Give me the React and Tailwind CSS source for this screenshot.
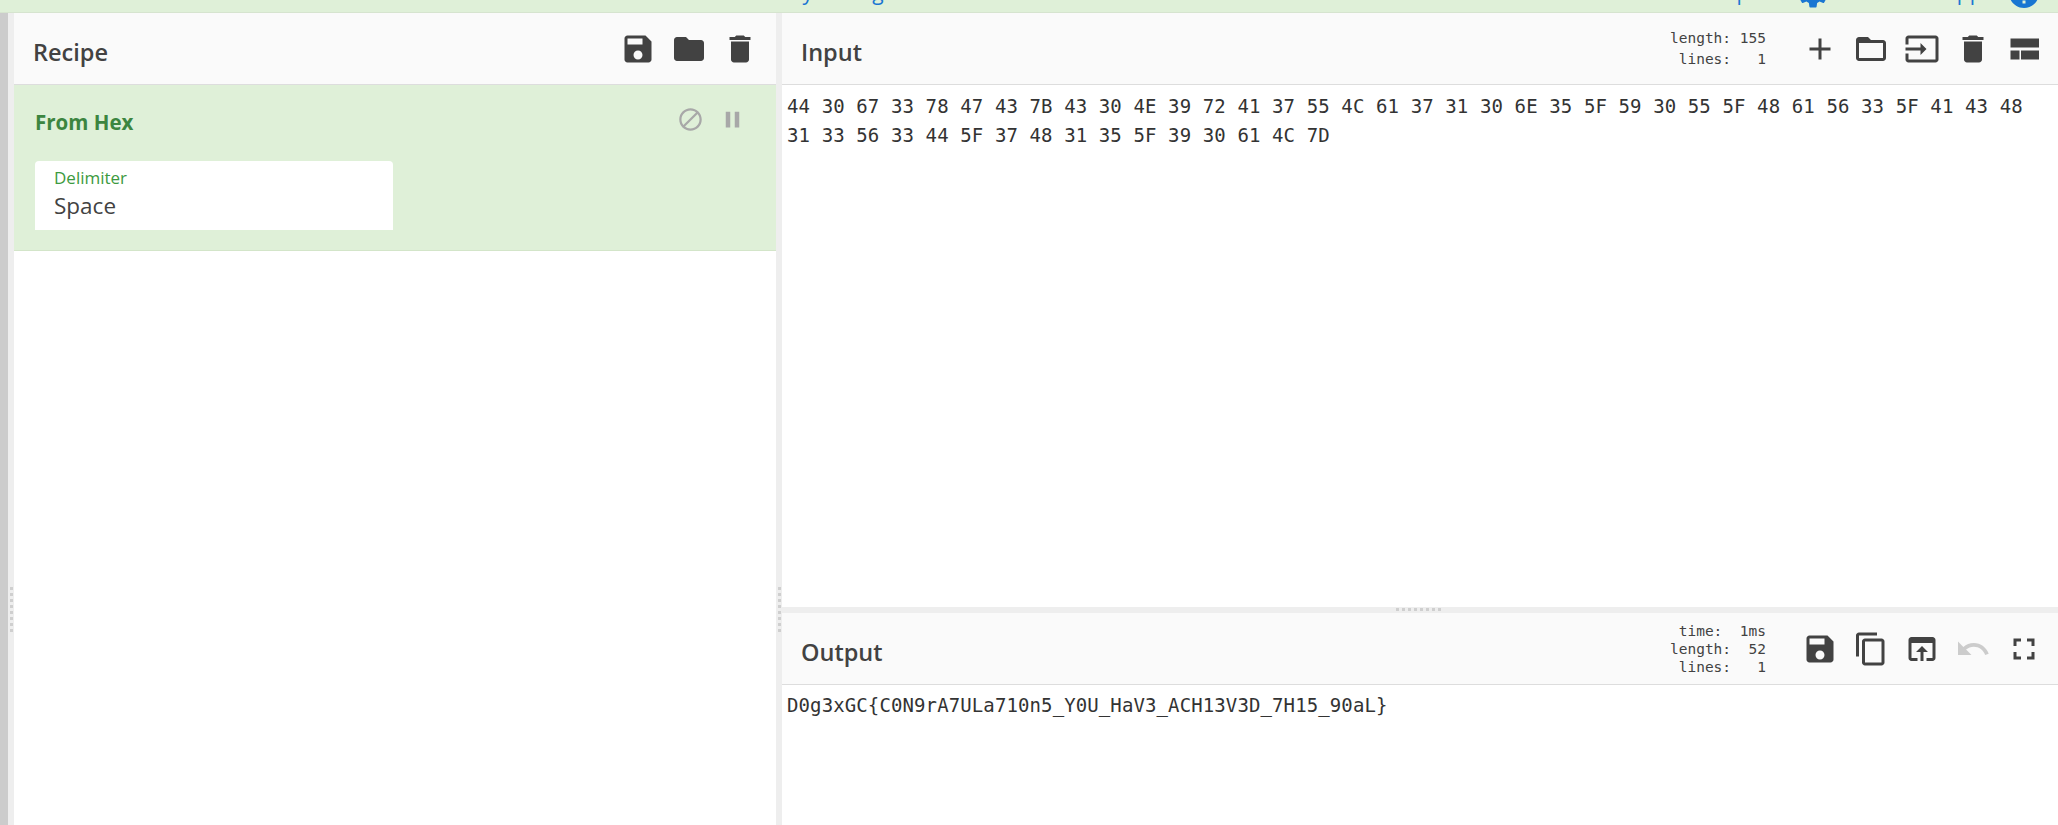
const save = "M17 3H5c-1.11 0-2 .9-2 2v14c0 1.1.89 2 2 2h14c1.1 0 2-.9 2-2V7l-4-4zm-5 16c-1.66 0-3-1.34-3-3s1.34-3 3-3 3 1.34 3 3-1.34 3-3 3zm3-10H5V5h10v4z"
const folder = "M10 4H4c-1.1 0-1.99.9-1.99 2L2 18c0 1.1.9 2 2 2h16c1.1 0 2-.9 2-2V8c0-1.1-.9-2-2-2h-8l-2-2z"
const folderOpen = "M20 6h-8l-2-2H4c-1.1 0-1.99.9-1.99 2L2 18c0 1.1.9 2 2 2h16c1.1 0 2-.9 2-2V8c0-1.1-.9-2-2-2zm0 12H4V8h16v10z"
const trash = "M6 19c0 1.1.9 2 2 2h8c1.1 0 2-.9 2-2V7H6v12zM19 4h-3.5l-1-1h-5l-1 1H5v2h14V4z"
const add = "M19 13h-6v6h-2v-6H5v-2h6V5h2v6h6v2z"
const input = "M21 3.01H3c-1.1 0-2 .9-2 2V9h2V4.99h18v14.03H3V15H1v4.01c0 1.1.9 1.98 2 1.98h18c1.1 0 2-.88 2-1.98v-14c0-1.11-.9-2-2-2zM11 16l4-4-4-4v3H1v2h10v3z"
const compact = "M3 19h6v-6H3v6zm7 0h12v-6H10v6zM3 5v6h19V5H3z"
const copy = "M16 1H4c-1.1 0-2 .9-2 2v14h2V3h12V1zm3 4H8c-1.1 0-2 .9-2 2v14c0 1.1.9 2 2 2h11c1.1 0 2-.9 2-2V7c0-1.1-.9-2-2-2zm0 16H8V7h11v14z"
const openIn = "M19 4H5c-1.11 0-2 .9-2 2v12c0 1.1.89 2 2 2h4v-2H5V8h14v10h-4v2h4c1.1 0 2-.9 2-2V6c0-1.1-.89-2-2-2zm-7 6l-4 4h3v6h2v-6h3l-4-4z"
const undo = "M12.5 8c-2.65 0-5.05.99-6.9 2.6L2 7v9h9l-3.62-3.62c1.39-1.16 3.16-1.88 5.12-1.88 3.54 0 6.55 2.31 7.6 5.5l2.37-.78C21.08 11.03 17.15 8 12.5 8z"
const fullscreen = "M7 14H5v5h5v-2H7v-3zm-2-4h2V7h3V5H5v5zm12 7h-3v2h5v-5h-2v3zM14 5v2h3v3h2V5h-5z"
const block = "M12 2C6.48 2 2 6.48 2 12s4.48 10 10 10 10-4.48 10-10S17.52 2 12 2zM4 12c0-4.42 3.58-8 8-8 1.85 0 3.55.63 4.9 1.69L5.69 16.9C4.63 15.55 4 13.85 4 12zm8 8c-1.85 0-3.55-.63-4.9-1.69L18.31 7.1C19.37 8.45 20 10.15 20 12c0 4.42-3.58 8-8 8z"
const pause = "M6 19h4V5H6v14zm8-14v14h4V5h-4z"
const settings = "M19.14 12.94c.04-.3.06-.61.06-.94 0-.32-.02-.64-.07-.94l2.03-1.58c.18-.14.23-.41.12-.61l-1.92-3.32c-.12-.22-.37-.29-.59-.22l-2.39.96c-.5-.38-1.03-.7-1.62-.94l-.36-2.54c-.04-.24-.24-.41-.48-.41h-3.84c-.24 0-.43.17-.47.41l-.36 2.54c-.59.24-1.13.57-1.62.94l-2.39-.96c-.22-.08-.47 0-.59.22L2.74 8.87c-.12.21-.08.47.12.61l2.03 1.58c-.05.3-.09.63-.09.94s.02.64.07.94l-2.03 1.58c-.18.14-.23.41-.12.61l1.92 3.32c.12.22.37.29.59.22l2.39-.96c.5.38 1.03.7 1.62.94l.36 2.54c.05.24.24.41.48.41h3.84c.24 0 .44-.17.47-.41l.36-2.54c.59-.24 1.13-.56 1.62-.94l2.39.96c.22.08.47 0 .59-.22l1.92-3.32c.12-.22.07-.47-.12-.61l-2.01-1.58zM12 15.6c-1.98 0-3.6-1.62-3.6-3.6s1.62-3.6 3.6-3.6 3.6 1.62 3.6 3.6-1.62 3.6-3.6 3.6z"
const help = "M12 2C6.48 2 2 6.48 2 12s4.48 10 10 10 10-4.48 10-10S17.52 2 12 2zm1 17h-2v-2h2v2zm2.07-7.75l-.9.92C13.45 12.9 13 13.5 13 15h-2v-.5c0-1.1.45-2.1 1.17-2.83l1.24-1.26c.37-.36.59-.86.59-1.41 0-1.1-.9-2-2-2s-2 .9-2 2H8c0-2.21 1.79-4 4-4s4 1.79 4 4c0 .88-.36 1.68-.93 2.25z"

function Icon({ d, className = 'w-[36px] h-[36px] text-[#424242]' }) {
  return (
    <svg className={className} viewBox="0 0 24 24" fill="currentColor">
      <path d={d} />
    </svg>
  )
}

function Stats({ rows, className }) {
  return (
    <div className={`font-['DejaVu_Sans_Mono',monospace] text-[14.5px] text-[#424242] whitespace-pre text-right mr-[36px] ${className}`}>
      {rows.map((r) => (
        <div key={r}>{r}</div>
      ))}
    </div>
  )
}

// Poignée de redimensionnement (points gris)
function Grip({ className }) {
  return (
    <div className={`flex gap-[3px] ${className}`}>
      {[0, 1, 2, 3, 4, 5, 6, 7].map((i) => (
        <div key={i} className="w-[3px] h-[3px] bg-[#cfcfcf]" />
      ))}
    </div>
  )
}

export default function App() {
  const hex = '44 30 67 33 78 47 43 7B 43 30 4E 39 72 41 37 55 4C 61 37 31 30 6E 35 5F 59 30 55 5F 48 61 56 33 5F 41 43 48 31 33 56 33 44 5F 37 48 31 35 5F 39 30 61 4C 7D'

  return (
    <div className="w-[2058px] h-[825px] flex flex-col overflow-hidden bg-white font-['Open_Sans',sans-serif] text-[#424242]">
      {/* bandeau du haut, coupé par le scroll */}
      <div className="h-[13px] shrink-0 bg-[#dff0d8] border-b border-[#d6e4cf] overflow-hidden flex items-start pl-[785px] text-[21px] leading-[30px] text-[#1976d2] whitespace-nowrap">
        <span className="-mt-[23px] flex-none">2 years ago</span>
        <span className="-mt-[23px] ml-[824px] flex-none">Options</span>
        <Icon d={settings} className="-mt-[25px] -ml-[3px] w-[36px] h-[36px] flex-none text-[#1976d2]" />
        <span className="-mt-[23px] ml-[24px] flex-none">About / Support</span>
        <Icon d={help} className="-mt-[25px] -ml-[5px] w-[36px] h-[36px] flex-none text-[#1976d2]" />
      </div>

      <div className="flex flex-1 min-h-0">
        <div className="w-[8px] bg-[#cccccc] shrink-0" />
        <div className="w-[6px] bg-[#eeeeee] shrink-0 pt-[574px] pl-[2px]">
          <Grip className="flex-col" />
        </div>

        {/* Recipe */}
        <div className="w-[762px] shrink-0 flex flex-col">
          <div className="h-[72px] bg-[#fafafa] border-b border-[#dddddd] flex items-center justify-between pl-[19px] pr-[18px] shrink-0">
            <span className="text-[23.5px] font-semibold pt-[8px]">Recipe</span>
            <div className="flex gap-[15px]">
              <Icon d={save} />
              <Icon d={folder} />
              <Icon d={trash} />
            </div>
          </div>
          <div className="h-[166px] bg-[#dff0d8] border-b border-[#d3e5c9] pl-[21px] pr-[30px] shrink-0">
            <div className="flex items-center justify-between h-[75px]">
              <span className="text-[20.5px] font-bold text-[#3c8540]">From Hex</span>
              <div className="flex gap-[15px] -mt-[6px]">
                <Icon d={block} className="w-[27px] h-[27px] text-[#a8a8a8]" />
                <Icon d={pause} className="w-[27px] h-[27px] text-[#a8a8a8]" />
              </div>
            </div>
            <div className="w-[358px] h-[69px] mt-px bg-white rounded-t-[4px] px-[19px] pt-[6px]">
              <div className="text-[17px] leading-[22px] text-[#3c9a40]">Delimiter</div>
              <div className="text-[22.5px] leading-[33px]">Space</div>
            </div>
          </div>
        </div>

        <div className="w-[6px] bg-[#eeeeee] shrink-0 pt-[574px] pl-[2px]">
          <Grip className="flex-col" />
        </div>

        {/* Input / Output */}
        <div className="flex-1 min-w-0 flex flex-col">
          <div className="h-[72px] bg-[#fafafa] border-b border-[#dddddd] flex items-center justify-between pl-[19px] shrink-0">
            <span className="text-[23.5px] font-semibold pt-[8px]">Input</span>
            <div className="flex items-center pr-[16px]">
              <Stats rows={['length: 155', 'lines:   1']} className="leading-[21px]" />
              <div className="flex gap-[15px]">
                <Icon d={add} />
                <Icon d={folderOpen} />
                <Icon d={input} />
                <Icon d={trash} />
                <Icon d={compact} />
              </div>
            </div>
          </div>
          <div className="h-[522px] shrink-0 pl-[5px] pr-[5px] pt-[7px] font-['DejaVu_Sans_Mono',monospace] text-[19px] leading-[29px] tracking-[0.11px] text-[#333333]">
            {hex}
          </div>
          <div className="h-[6px] bg-[#eeeeee] shrink-0 flex justify-center pt-px">
            <Grip className="ml-[-4px]" />
          </div>
          <div className="h-[72px] bg-[#fafafa] border-b border-[#dddddd] flex items-center justify-between pl-[19px] shrink-0">
            <span className="text-[23.5px] font-semibold pt-[8px]">Output</span>
            <div className="flex items-center pr-[16px]">
              <Stats rows={['time:  1ms', 'length:  52', 'lines:   1']} className="leading-[18px]" />
              <div className="flex gap-[15px]">
                <Icon d={save} />
                <Icon d={copy} />
                <Icon d={openIn} />
                <Icon d={undo} className="w-[36px] h-[36px] text-[#cccccc]" />
                <Icon d={fullscreen} />
              </div>
            </div>
          </div>
          <div className="pl-[5px] pt-[6px] font-['DejaVu_Sans_Mono',monospace] text-[19px] leading-[29px] tracking-[0.11px] text-[#333333]">
            {'D0g3xGC{C0N9rA7ULa710n5_Y0U_HaV3_ACH13V3D_7H15_90aL}'}
          </div>
        </div>
      </div>
    </div>
  )
}
